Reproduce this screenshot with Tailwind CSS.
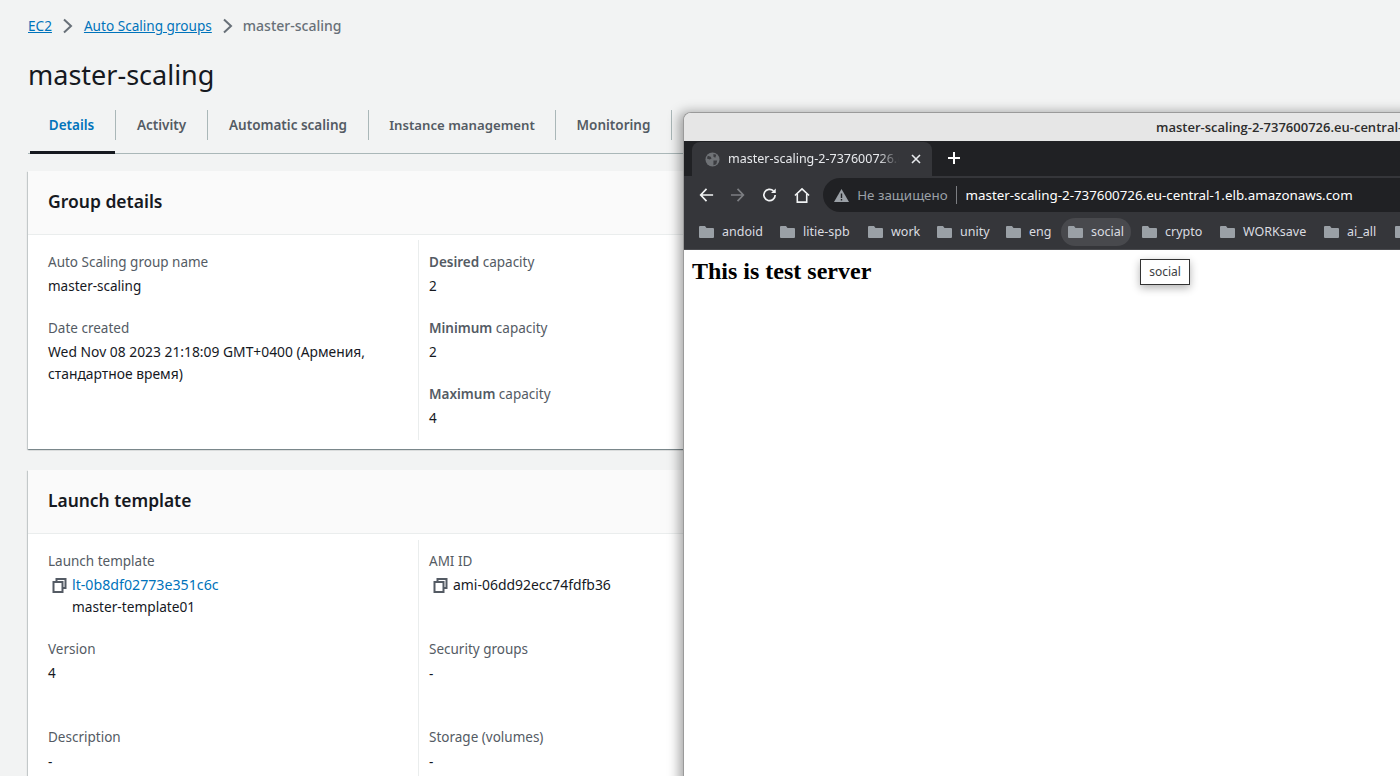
<!DOCTYPE html>
<html lang="en">
<head>
    <meta charset="UTF-8">
    <title>master-scaling</title>
    <script src="https://cdn.jsdelivr.net/npm/@tailwindcss/browser@4"></script>
</head>
<body class="relative h-[776px] w-[1400px] overflow-hidden bg-[#f2f3f3] font-['Noto_Sans',sans-serif] text-[13.5px] text-[#16191f]">
    <!-- AWS console page -->
    <main class="pl-[28px] w-[1500px]">
        <nav class="flex items-center h-[20px] mt-[16px] text-[13.6px] leading-[20px]">
            <a class="text-[#0073bb] underline">EC2</a>
            <svg class="w-[12px] h-[16px] ml-[10px] mr-[10px]" viewBox="0 0 12 16" fill="none" stroke="#687078" stroke-width="2"><path d="M2 1.5 9 8l-7 6.5"/></svg>
            <a class="text-[#0073bb] underline">Auto Scaling groups</a>
            <svg class="w-[12px] h-[16px] ml-[10px] mr-[9px]" viewBox="0 0 12 16" fill="none" stroke="#687078" stroke-width="2"><path d="M2 1.5 9 8l-7 6.5"/></svg>
            <span class="text-[14px] text-[#687078] font-medium">master-scaling</span>
        </nav>

        <h1 class="mt-[19px] h-[40px] text-[27px] leading-[40px] font-normal">master-scaling</h1>

        <div class="mt-[15px] flex h-[44px] w-[660px] border-b border-[#aab7b8] font-semibold text-[13.5px] text-[#545b64]">
            <div class="flex h-[44px] w-[85px] items-start justify-center border-b-[3px] border-[#16191f] pt-[5px] ml-[2px] pr-[2px] text-[#0073bb]">Details</div>
            <span class="flex h-[30px] w-[92px] items-center justify-center border-l border-[#aab7b8] pt-[1px]">Activity</span>
            <span class="flex h-[30px] w-[161px] items-center justify-center border-l border-[#aab7b8] pt-[1px]">Automatic scaling</span>
            <span class="flex h-[30px] w-[187px] items-center justify-center border-l border-[#aab7b8] pt-[1px] text-[13.2px]">Instance management</span>
            <span class="flex h-[30px] w-[117px] items-center justify-center border-x border-[#aab7b8] pt-[1px]">Monitoring</span>
        </div>

        <section class="mt-[17px] h-[278px] w-[700px] bg-white shadow-[0_1px_1px_0_rgba(0,28,36,0.3),1px_1px_1px_0_rgba(0,28,36,0.15),-1px_1px_1px_0_rgba(0,28,36,0.15)]">
            <div class="flex h-[64px] items-center border-b border-[#eaeded] bg-[#fafafa] pb-[2px] pl-[20px] text-[17.5px] font-semibold">Group details</div>
            <div class="mt-[5px] flex h-[200px]">
                <div class="w-[390px] pl-[20px] pr-[15px]">
                    <div class="mt-[11px] leading-[22px] text-[#545b64]">Auto Scaling group name</div>
                    <div class="mt-[2px] leading-[22px]">master-scaling</div>
                    <div class="mt-[20px] leading-[22px] text-[#545b64]">Date created</div>
                    <div class="mt-[2px] text-[13.85px] leading-[22px]">Wed Nov 08 2023 21:18:09 GMT+0400 (Армения, стандартное время)</div>
                </div>
                <div class="border-l border-[#eaeded] pl-[10px]">
                    <div class="mt-[11px] leading-[22px] text-[#545b64]"><b class="font-semibold">Desired</b> capacity</div>
                    <div class="mt-[2px] leading-[22px]">2</div>
                    <div class="mt-[20px] leading-[22px] text-[#545b64]"><b class="font-semibold">Minimum</b> capacity</div>
                    <div class="mt-[2px] leading-[22px]">2</div>
                    <div class="mt-[20px] leading-[22px] text-[#545b64]"><b class="font-semibold">Maximum</b> capacity</div>
                    <div class="mt-[2px] leading-[22px]">4</div>
                </div>
            </div>
        </section>

        <section class="mt-[21px] h-[320px] w-[700px] bg-white shadow-[0_1px_1px_0_rgba(0,28,36,0.3),1px_1px_1px_0_rgba(0,28,36,0.15),-1px_1px_1px_0_rgba(0,28,36,0.15)]">
            <div class="flex h-[64px] items-center border-b border-[#eaeded] bg-[#fafafa] pb-[2px] pl-[20px] text-[17.4px] font-semibold">Launch template</div>
            <div class="mt-[6px] flex h-[250px]">
                <div class="w-[390px] pl-[20px] pr-[20px]">
                    <div class="mt-[10px] leading-[22px] text-[#545b64]">Launch template</div>
                    <div class="mt-[2px] flex h-[22px] items-center">
                        <svg class="ml-[4px] mr-[5px] w-[15px] h-[15px]" viewBox="0 0 15 15" fill="none" stroke="#545b64" stroke-width="2"><path d="M4.5 3V1h9v9h-2.5"/><path d="M1.5 4h9v10h-9z"/></svg>
                        <a class="text-[14.2px] text-[#0073bb]">lt-0b8df02773e351c6c</a>
                    </div>
                    <div class="pl-[24px] text-[13.7px] leading-[22px]">master-template01</div>
                    <div class="mt-[20px] leading-[22px] text-[#545b64]">Version</div>
                    <div class="mt-[2px] leading-[22px]">4</div>
                    <div class="mt-[42px] leading-[22px] text-[#545b64]">Description</div>
                    <div class="mt-[3px] leading-[22px]">-</div>
                </div>
                <div class="border-l border-[#eaeded] pl-[10px]">
                    <div class="mt-[10px] leading-[22px] text-[#545b64]">AMI ID</div>
                    <div class="mt-[2px] flex h-[22px] items-center">
                        <svg class="ml-[4px] mr-[5px] w-[15px] h-[15px]" viewBox="0 0 15 15" fill="none" stroke="#545b64" stroke-width="2"><path d="M4.5 3V1h9v9h-2.5"/><path d="M1.5 4h9v10h-9z"/></svg>
                        <span class="text-[13.95px]">ami-06dd92ecc74fdfb36</span>
                    </div>
                    <div class="mt-[42px] leading-[22px] text-[#545b64]">Security groups</div>
                    <div class="mt-[3px] leading-[22px]">-</div>
                    <div class="mt-[41px] leading-[22px] text-[#545b64]">Storage (volumes)</div>
                    <div class="mt-[3px] leading-[22px]">-</div>
                </div>
            </div>
        </section>
    </main>

    <!-- browser window floating over the console -->
    <div class="absolute left-[683px] top-[112px] h-[700px] w-[800px] overflow-hidden rounded-t-[8px] border-l border-t border-[#9a9a9a] bg-white shadow-[-4px_0_12px_rgba(0,0,0,0.35)]">
        <div class="flex h-[28px] items-center bg-[#e6e6e6] pl-[472px] pt-[2px] text-[13px] font-semibold text-[#2d2d2d] font-['Open_Sans',sans-serif]">master-scaling-2-737600726.eu-central-1</div>

        <div class="flex h-[35px] bg-[#202124] pl-[8px]">
            <div class="mt-[1px] flex h-[34px] w-[240px] items-center rounded-t-[8px] bg-[#35363a] pl-[13px] text-[12.5px] text-[#e8eaed]">
                <svg class="h-[15px] w-[15px] shrink-0" viewBox="0 0 16 16"><circle cx="8" cy="8" r="7.5" fill="#6f7276"/><path d="M3 4l3 1 1 2-2 1-3-1zM9 2l3 1-1 3-2-1zM9 9l4 0-1 4-3 1z" fill="#3c3d41"/></svg>
                <span class="ml-[8px] w-[171px] overflow-hidden whitespace-nowrap [mask-image:linear-gradient(to_right,black_88%,transparent)]">master-scaling-2-737600726.eu-central</span>
                <svg class="ml-[12px] h-[10px] w-[10px]" viewBox="0 0 10 10" stroke="#e8eaed" stroke-width="1.6"><path d="M1 1l8 8M9 1l-8 8"/></svg>
            </div>
            <svg class="ml-[15px] mt-[10px] h-[14px] w-[14px]" viewBox="0 0 14 14" stroke="#fff" stroke-width="2"><path d="M7 1v12M1 7h12"/></svg>
        </div>

        <div class="flex h-[38px] items-center bg-[#35363a] pl-[15px]">
            <svg class="h-[16px] w-[16px]" viewBox="0 0 16 16" fill="none" stroke="#f1f3f4" stroke-width="1.8"><path d="M15 8H2M8 1.5 1.8 8 8 14.5"/></svg>
            <svg class="ml-[16px] h-[16px] w-[16px]" viewBox="0 0 16 16" fill="none" stroke="#7c7e82" stroke-width="1.8"><path d="M1 8h13M8 1.5 14.2 8 8 14.5"/></svg>
            <svg class="ml-[17px] h-[16px] w-[16px]" viewBox="0 0 16 16" fill="none" stroke="#f1f3f4" stroke-width="1.8"><path d="M14 8a6 6 0 1 1-1.8-4.3"/><path d="M14.6 1v5h-5z" fill="#f1f3f4" stroke="none"/></svg>
            <svg class="ml-[17px] h-[17px] w-[17px]" viewBox="0 0 17 17" fill="none" stroke="#f1f3f4" stroke-width="1.7"><path d="M1 8.5 8.5 1.5 16 8.5"/><path d="M3.5 7v8.5h10V7"/></svg>
            <div class="ml-[13px] flex h-[34px] w-[700px] items-center rounded-l-full bg-[#202124] pl-[11px] text-[13.35px]">
                <svg class="h-[13px] w-[15px]" viewBox="0 0 15 13"><path d="M7.5 0 15 13H0z" fill="#9aa0a6"/><path d="M6.8 4.5h1.4v4.5H6.8zM6.8 10h1.4v1.4H6.8z" fill="#202124"/></svg>
                <span class="ml-[8px] text-[#9aa0a6]">Не защищено</span>
                <span class="ml-[8px] h-[18px] border-l border-[#7c7e82]"></span>
                <span class="ml-[9px] whitespace-nowrap text-white">master-scaling-2-737600726.eu-central-1.elb.amazonaws.com</span>
            </div>
        </div>

        <div class="flex h-[36px] items-center border-b border-[#4a4b4f] bg-[#35363a] pl-[5px] text-[12.5px] text-[#dadce0]">
            <div class="flex h-[28px] w-[81px] shrink-0 items-center pl-[10px]"><svg class="h-[12px] w-[15px]" viewBox="0 0 15 12"><path d="M1 0h5l1.5 2H14a1 1 0 0 1 1 1v8a1 1 0 0 1-1 1H1a1 1 0 0 1-1-1V1a1 1 0 0 1 1-1z" fill="#9aa0a6"/></svg><span class="ml-[8px] pt-[2px]">andoid</span></div>
            <div class="flex h-[28px] w-[88px] shrink-0 items-center pl-[10px]"><svg class="h-[12px] w-[15px]" viewBox="0 0 15 12"><path d="M1 0h5l1.5 2H14a1 1 0 0 1 1 1v8a1 1 0 0 1-1 1H1a1 1 0 0 1-1-1V1a1 1 0 0 1 1-1z" fill="#9aa0a6"/></svg><span class="ml-[8px] pt-[2px]">litie-spb</span></div>
            <div class="flex h-[28px] w-[69px] shrink-0 items-center pl-[10px]"><svg class="h-[12px] w-[15px]" viewBox="0 0 15 12"><path d="M1 0h5l1.5 2H14a1 1 0 0 1 1 1v8a1 1 0 0 1-1 1H1a1 1 0 0 1-1-1V1a1 1 0 0 1 1-1z" fill="#9aa0a6"/></svg><span class="ml-[8px] pt-[2px]">work</span></div>
            <div class="flex h-[28px] w-[69px] shrink-0 items-center pl-[10px]"><svg class="h-[12px] w-[15px]" viewBox="0 0 15 12"><path d="M1 0h5l1.5 2H14a1 1 0 0 1 1 1v8a1 1 0 0 1-1 1H1a1 1 0 0 1-1-1V1a1 1 0 0 1 1-1z" fill="#9aa0a6"/></svg><span class="ml-[8px] pt-[2px]">unity</span></div>
            <div class="flex h-[28px] w-[65px] shrink-0 items-center pl-[10px]"><svg class="h-[12px] w-[15px]" viewBox="0 0 15 12"><path d="M1 0h5l1.5 2H14a1 1 0 0 1 1 1v8a1 1 0 0 1-1 1H1a1 1 0 0 1-1-1V1a1 1 0 0 1 1-1z" fill="#9aa0a6"/></svg><span class="ml-[8px] pt-[2px]">eng</span></div>
            <div class="flex h-[28px] w-[70px] shrink-0 items-center rounded-full bg-[#48494d] pl-[7px]"><svg class="h-[12px] w-[15px]" viewBox="0 0 15 12"><path d="M1 0h5l1.5 2H14a1 1 0 0 1 1 1v8a1 1 0 0 1-1 1H1a1 1 0 0 1-1-1V1a1 1 0 0 1 1-1z" fill="#9aa0a6"/></svg><span class="ml-[8px] pt-[2px]">social</span></div>
            <div class="flex h-[28px] w-[79px] shrink-0 items-center pl-[11px]"><svg class="h-[12px] w-[15px]" viewBox="0 0 15 12"><path d="M1 0h5l1.5 2H14a1 1 0 0 1 1 1v8a1 1 0 0 1-1 1H1a1 1 0 0 1-1-1V1a1 1 0 0 1 1-1z" fill="#9aa0a6"/></svg><span class="ml-[8px] pt-[2px]">crypto</span></div>
            <div class="flex h-[28px] w-[104px] shrink-0 items-center pl-[10px]"><svg class="h-[12px] w-[15px]" viewBox="0 0 15 12"><path d="M1 0h5l1.5 2H14a1 1 0 0 1 1 1v8a1 1 0 0 1-1 1H1a1 1 0 0 1-1-1V1a1 1 0 0 1 1-1z" fill="#9aa0a6"/></svg><span class="ml-[8px] pt-[2px]">WORKsave</span></div>
            <div class="flex h-[28px] w-[71px] shrink-0 items-center pl-[10px]"><svg class="h-[12px] w-[15px]" viewBox="0 0 15 12"><path d="M1 0h5l1.5 2H14a1 1 0 0 1 1 1v8a1 1 0 0 1-1 1H1a1 1 0 0 1-1-1V1a1 1 0 0 1 1-1z" fill="#9aa0a6"/></svg><span class="ml-[8px] pt-[2px]">ai_all</span></div>
            <div class="flex h-[28px] items-center pl-[10px]"><svg class="h-[12px] w-[15px]" viewBox="0 0 15 12"><path d="M1 0h5l1.5 2H14a1 1 0 0 1 1 1v8a1 1 0 0 1-1 1H1a1 1 0 0 1-1-1V1a1 1 0 0 1 1-1z" fill="#9aa0a6"/></svg></div>
        </div>

        <div class="pl-[8px] pt-[7px] font-['Liberation_Serif',serif] text-[24px] leading-[28px] font-bold text-black">This is test server</div>

        <div class="absolute left-[456px] top-[146px] flex h-[26px] w-[50px] items-center justify-center border border-[#333] bg-white text-[12px] text-[#3c4043] shadow-[0_3px_8px_rgba(0,0,0,0.3)]">social</div>
    </div>
</body>
</html>
